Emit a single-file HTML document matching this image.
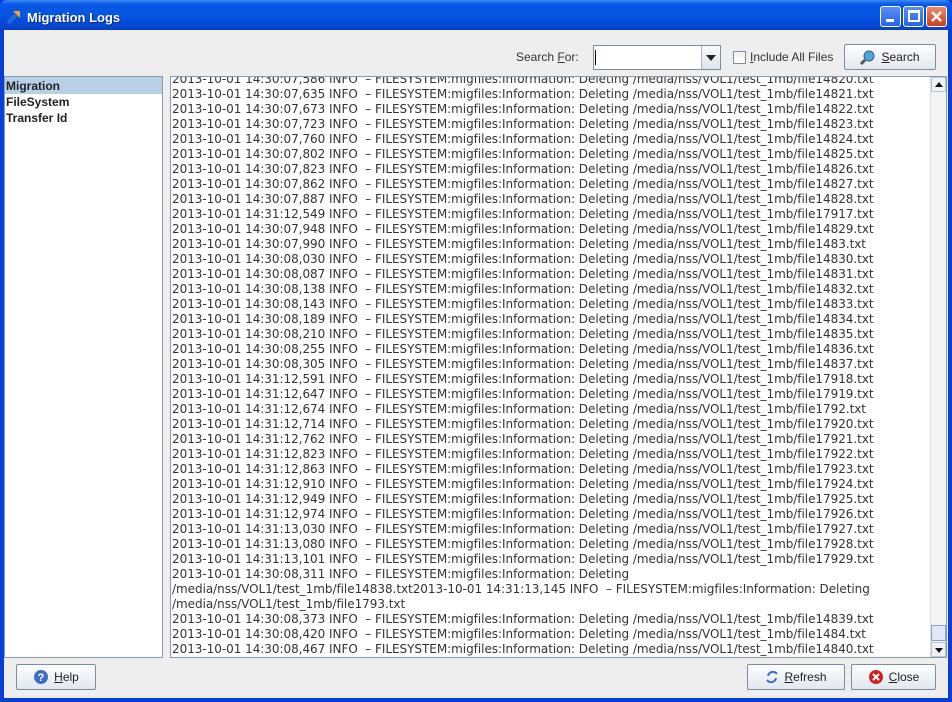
<!DOCTYPE html>
<html><head><meta charset="utf-8"><style>
*{margin:0;padding:0;box-sizing:border-box}
body{width:952px;height:702px;overflow:hidden;background:#0a3fd6;font-family:"DejaVu Sans","Liberation Sans",sans-serif;position:relative}
.title{position:absolute;left:0;top:0;width:952px;height:30px;background:linear-gradient(#3d8cf5 0,#0a5ae6 4px,#0555e3 15px,#0447d4 26px,#0a3fc0 30px);border-radius:7px 7px 0 0}
.title span{position:absolute;left:27px;top:10px;color:#fff;font:bold 13px "Liberation Sans",sans-serif;text-shadow:1px 1px #0a2a90}
.client{position:absolute;left:4px;top:30px;width:944px;height:668px;background:#eeeeee}
.btnw{position:absolute;top:6px;width:21px;height:21px;border:1px solid #fff;border-radius:3px;background:linear-gradient(#5b8ef7,#2763e5)}
.abs{position:absolute}
.btn{position:absolute;border:1px solid #7a8ea8;border-radius:2px;background:linear-gradient(#fdfdfd,#e2e8f0);font:12px "Liberation Sans",sans-serif;color:#222;display:flex;align-items:center;justify-content:center;gap:5px}
.log{position:absolute;left:170px;top:76px;width:777px;height:582px;background:#fff;border:1px solid #8a9bb0;overflow:hidden}
.lines{position:absolute;left:1px;top:-5px;font-size:12px;line-height:15px;color:#333;white-space:pre;letter-spacing:-0.04px}
</style></head><body>
<div class="title"><svg class="abs" style="left:6px;top:8px" width="17" height="17"><path d="M2 15 L12 5" stroke="#2a6bc9" stroke-width="4"/><path d="M7 3 L14 3 L14 10 Z" fill="#f0a030"/></svg><span>Migration Logs</span></div>
<div class="btnw" style="left:880px"><div class="abs" style="left:5px;top:12px;width:8px;height:3px;background:#fff"></div></div>
<div class="btnw" style="left:903px"><div class="abs" style="left:4px;top:3px;width:12px;height:12px;border:2px solid #fff;border-top-width:3px"></div></div>
<div class="btnw" style="left:926px;background:linear-gradient(#e98b6c,#c8421b)"><svg class="abs" style="left:3px;top:3px" width="13" height="13"><path d="M2 2L11 11M11 2L2 11" stroke="#fff" stroke-width="2.4"/></svg></div>
<div class="client"></div>
<div class="abs" style="left:516px;top:50px;font:12px 'Liberation Sans',sans-serif;color:#333">Search <u>F</u>or:</div>
<div class="abs" style="left:593px;top:45px;width:128px;height:25px;border:1px solid #7a8ea8;background:#fff"><div class="abs" style="left:1px;top:4px;width:1px;height:15px;background:#000"></div><div class="abs" style="right:0;top:0;width:19px;height:23px;border-left:1px solid #a8b6c8;background:linear-gradient(#f8f8f8,#dde4ec)"><div class="abs" style="left:4px;top:9px;border:5px solid transparent;border-top:6px solid #222;border-bottom:0"></div></div></div>
<div class="abs" style="left:733px;top:51px;width:13px;height:13px;border:1px solid #7a8ea8;background:linear-gradient(#f0f0f0,#fff)"></div>
<div class="abs" style="left:750px;top:50px;font:12px 'Liberation Sans',sans-serif;color:#333"><u>I</u>nclude All Files</div>
<div class="btn" style="left:844px;top:44px;width:92px;height:26px"><svg width="16" height="16"><circle cx="9" cy="7" r="5" fill="#4aa8e0" stroke="#2b5f8a"/><path d="M5 11 L1 15" stroke="#555" stroke-width="3"/></svg><span><u>S</u>earch</span></div>
<div class="abs" style="left:4px;top:76px;width:159px;height:582px;background:#fff;border:1px solid #8a9bb0;font:bold 12px 'Liberation Sans',sans-serif;color:#222">
<div style="height:17px;background:#b8cfe5;padding:2px 0 0 1px">Migration</div>
<div style="height:17px;padding:1px 0 0 1px">FileSystem</div>
<div style="height:17px;padding:0 0 0 1px">Transfer Id</div></div>
<div class="log"><div class="lines">2013-10-01 14:30:07,586 INFO  – FILESYSTEM:migfiles:Information: Deleting /media/nss/VOL1/test_1mb/file14820.txt
2013-10-01 14:30:07,635 INFO  – FILESYSTEM:migfiles:Information: Deleting /media/nss/VOL1/test_1mb/file14821.txt
2013-10-01 14:30:07,673 INFO  – FILESYSTEM:migfiles:Information: Deleting /media/nss/VOL1/test_1mb/file14822.txt
2013-10-01 14:30:07,723 INFO  – FILESYSTEM:migfiles:Information: Deleting /media/nss/VOL1/test_1mb/file14823.txt
2013-10-01 14:30:07,760 INFO  – FILESYSTEM:migfiles:Information: Deleting /media/nss/VOL1/test_1mb/file14824.txt
2013-10-01 14:30:07,802 INFO  – FILESYSTEM:migfiles:Information: Deleting /media/nss/VOL1/test_1mb/file14825.txt
2013-10-01 14:30:07,823 INFO  – FILESYSTEM:migfiles:Information: Deleting /media/nss/VOL1/test_1mb/file14826.txt
2013-10-01 14:30:07,862 INFO  – FILESYSTEM:migfiles:Information: Deleting /media/nss/VOL1/test_1mb/file14827.txt
2013-10-01 14:30:07,887 INFO  – FILESYSTEM:migfiles:Information: Deleting /media/nss/VOL1/test_1mb/file14828.txt
2013-10-01 14:31:12,549 INFO  – FILESYSTEM:migfiles:Information: Deleting /media/nss/VOL1/test_1mb/file17917.txt
2013-10-01 14:30:07,948 INFO  – FILESYSTEM:migfiles:Information: Deleting /media/nss/VOL1/test_1mb/file14829.txt
2013-10-01 14:30:07,990 INFO  – FILESYSTEM:migfiles:Information: Deleting /media/nss/VOL1/test_1mb/file1483.txt
2013-10-01 14:30:08,030 INFO  – FILESYSTEM:migfiles:Information: Deleting /media/nss/VOL1/test_1mb/file14830.txt
2013-10-01 14:30:08,087 INFO  – FILESYSTEM:migfiles:Information: Deleting /media/nss/VOL1/test_1mb/file14831.txt
2013-10-01 14:30:08,138 INFO  – FILESYSTEM:migfiles:Information: Deleting /media/nss/VOL1/test_1mb/file14832.txt
2013-10-01 14:30:08,143 INFO  – FILESYSTEM:migfiles:Information: Deleting /media/nss/VOL1/test_1mb/file14833.txt
2013-10-01 14:30:08,189 INFO  – FILESYSTEM:migfiles:Information: Deleting /media/nss/VOL1/test_1mb/file14834.txt
2013-10-01 14:30:08,210 INFO  – FILESYSTEM:migfiles:Information: Deleting /media/nss/VOL1/test_1mb/file14835.txt
2013-10-01 14:30:08,255 INFO  – FILESYSTEM:migfiles:Information: Deleting /media/nss/VOL1/test_1mb/file14836.txt
2013-10-01 14:30:08,305 INFO  – FILESYSTEM:migfiles:Information: Deleting /media/nss/VOL1/test_1mb/file14837.txt
2013-10-01 14:31:12,591 INFO  – FILESYSTEM:migfiles:Information: Deleting /media/nss/VOL1/test_1mb/file17918.txt
2013-10-01 14:31:12,647 INFO  – FILESYSTEM:migfiles:Information: Deleting /media/nss/VOL1/test_1mb/file17919.txt
2013-10-01 14:31:12,674 INFO  – FILESYSTEM:migfiles:Information: Deleting /media/nss/VOL1/test_1mb/file1792.txt
2013-10-01 14:31:12,714 INFO  – FILESYSTEM:migfiles:Information: Deleting /media/nss/VOL1/test_1mb/file17920.txt
2013-10-01 14:31:12,762 INFO  – FILESYSTEM:migfiles:Information: Deleting /media/nss/VOL1/test_1mb/file17921.txt
2013-10-01 14:31:12,823 INFO  – FILESYSTEM:migfiles:Information: Deleting /media/nss/VOL1/test_1mb/file17922.txt
2013-10-01 14:31:12,863 INFO  – FILESYSTEM:migfiles:Information: Deleting /media/nss/VOL1/test_1mb/file17923.txt
2013-10-01 14:31:12,910 INFO  – FILESYSTEM:migfiles:Information: Deleting /media/nss/VOL1/test_1mb/file17924.txt
2013-10-01 14:31:12,949 INFO  – FILESYSTEM:migfiles:Information: Deleting /media/nss/VOL1/test_1mb/file17925.txt
2013-10-01 14:31:12,974 INFO  – FILESYSTEM:migfiles:Information: Deleting /media/nss/VOL1/test_1mb/file17926.txt
2013-10-01 14:31:13,030 INFO  – FILESYSTEM:migfiles:Information: Deleting /media/nss/VOL1/test_1mb/file17927.txt
2013-10-01 14:31:13,080 INFO  – FILESYSTEM:migfiles:Information: Deleting /media/nss/VOL1/test_1mb/file17928.txt
2013-10-01 14:31:13,101 INFO  – FILESYSTEM:migfiles:Information: Deleting /media/nss/VOL1/test_1mb/file17929.txt
2013-10-01 14:30:08,311 INFO  – FILESYSTEM:migfiles:Information: Deleting
/media/nss/VOL1/test_1mb/file14838.txt2013-10-01 14:31:13,145 INFO  – FILESYSTEM:migfiles:Information: Deleting
/media/nss/VOL1/test_1mb/file1793.txt
2013-10-01 14:30:08,373 INFO  – FILESYSTEM:migfiles:Information: Deleting /media/nss/VOL1/test_1mb/file14839.txt
2013-10-01 14:30:08,420 INFO  – FILESYSTEM:migfiles:Information: Deleting /media/nss/VOL1/test_1mb/file1484.txt
2013-10-01 14:30:08,467 INFO  – FILESYSTEM:migfiles:Information: Deleting /media/nss/VOL1/test_1mb/file14840.txt</div>
<div class="abs" style="right:0;top:0;width:16px;height:580px;background:#f3f3f3;border-left:1px solid #e0e0e0">
<div class="abs" style="left:0;top:0;width:15px;height:15px;border:1px solid #b8c4d4;background:#eef1f5"><div class="abs" style="left:3px;top:4px;border:4px solid transparent;border-bottom:5px solid #111;border-top:0"></div></div>
<div class="abs" style="left:0;top:548px;width:15px;height:16px;border:1px solid #8aa0c8;background:#dfe8f8"></div>
<div class="abs" style="left:0;bottom:0;width:15px;height:15px;border:1px solid #b8c4d4;background:#eef1f5"><div class="abs" style="left:3px;top:5px;border:4px solid transparent;border-top:5px solid #111;border-bottom:0"></div></div>
</div></div>
<div class="btn" style="left:16px;top:664px;width:80px;height:26px"><svg width="16" height="16"><circle cx="8" cy="8" r="7" fill="#3d6fc0"/><text x="8" y="12" font-size="11" font-weight="bold" fill="#fff" text-anchor="middle" font-family="Liberation Sans">?</text></svg><span><u>H</u>elp</span></div>
<div class="btn" style="left:747px;top:664px;width:98px;height:26px"><svg width="14" height="16"><path d="M3 7a5 5 0 0 1 9-2M11 9a5 5 0 0 1-9 2" stroke="#3a6fd0" stroke-width="2" fill="none"/></svg><span><u>R</u>efresh</span></div>
<div class="btn" style="left:851px;top:664px;width:85px;height:26px"><svg width="16" height="16"><circle cx="8" cy="8" r="7" fill="#d02020"/><path d="M5 5L11 11M11 5L5 11" stroke="#fff" stroke-width="2"/></svg><span><u>C</u>lose</span></div>
</body></html>
